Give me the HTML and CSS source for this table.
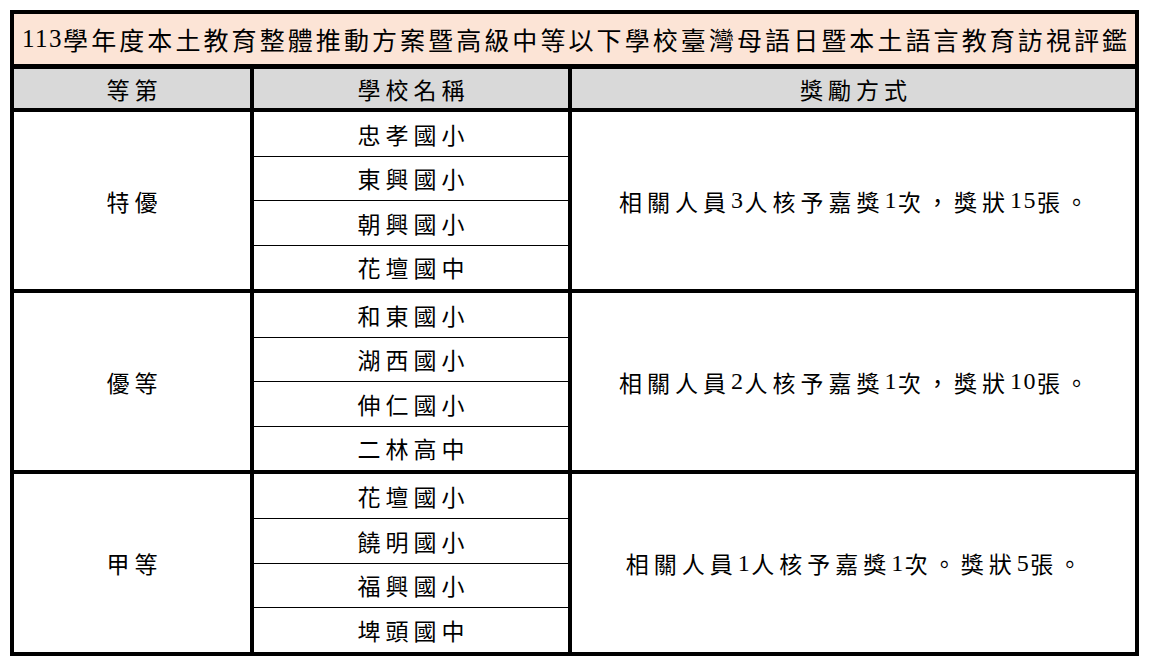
FILE: index.html
```html
<!DOCTYPE html>
<html lang="zh-Hant">
<head>
<meta charset="utf-8">
<title>訪視評鑑</title>
<link rel="stylesheet" href="styles.css">
</head>
<body>
<div class="sheet">
  <div class="title"><span class="num">113</span>學年度本土教育整體推動方案暨高級中等以下學校臺灣母語日暨本土語言教育訪視評鑑</div>
  <div class="grid">
    <div class="cell head">等第</div>
    <div class="cell head">學校名稱</div>
    <div class="cell head">獎勵方式</div>

    <div class="cell rank">特優</div>
    <div class="cell schools">
      <div class="school">忠孝國小</div>
      <div class="school">東興國小</div>
      <div class="school">朝興國小</div>
      <div class="school">花壇國中</div>
    </div>
    <div class="cell award">相關人員<span class="d">3</span>人核予嘉獎<span class="d">1</span>次，獎狀<span class="d">15</span>張。</div>

    <div class="cell rank">優等</div>
    <div class="cell schools">
      <div class="school">和東國小</div>
      <div class="school">湖西國小</div>
      <div class="school">伸仁國小</div>
      <div class="school">二林高中</div>
    </div>
    <div class="cell award">相關人員<span class="d">2</span>人核予嘉獎<span class="d">1</span>次，獎狀<span class="d">10</span>張。</div>

    <div class="cell rank">甲等</div>
    <div class="cell schools">
      <div class="school">花壇國小</div>
      <div class="school">饒明國小</div>
      <div class="school">福興國小</div>
      <div class="school">埤頭國中</div>
    </div>
    <div class="cell award">相關人員<span class="d">1</span>人核予嘉獎<span class="d">1</span>次。獎狀<span class="d">5</span>張。</div>
  </div>
</div>
</body>
</html>
```

FILE: styles.css
```css
html, body {
  margin: 0;
  padding: 0;
  background: #ffffff;
}
body {
  padding: 10px 0 0 10px;
  font-family: "Liberation Serif", "Noto Sans CJK TC", serif;
  color: #000000;
}
.sheet {
  width: 1129px;
  box-sizing: border-box;
  border: 4px solid #000000;
  background: #000000;
}
.title {
  box-sizing: border-box;
  border-bottom: 5px solid #000000;
  height: 55px;
  background: #fce4d6;
  display: flex;
  align-items: center;
  padding-left: 8px;
  font-size: 25px;
  letter-spacing: 3.08px;
  white-space: nowrap;
}
.title .num {
  letter-spacing: 1.5px;
}
.grid {
  display: grid;
  grid-template-columns: 236px 314px 563px;
  grid-template-rows: 39px 177px 177px 178px;
  gap: 4px;
}
.cell {
  background: #ffffff;
  display: flex;
  align-items: center;
  justify-content: center;
  font-size: 23px;
  letter-spacing: 5px;
  padding-left: 5px;
  white-space: nowrap;
}
.head {
  background: #d9d9d9;
}
.schools {
  flex-direction: column;
  align-items: stretch;
  background: #000000;
  gap: 1px;
  padding-left: 0;
}
.school {
  flex: 1;
  background: #ffffff;
  display: flex;
  align-items: center;
  justify-content: center;
  padding-left: 5px;
}
.award .d {
  font-size: 24px;
  letter-spacing: 1.5px;
}
```
